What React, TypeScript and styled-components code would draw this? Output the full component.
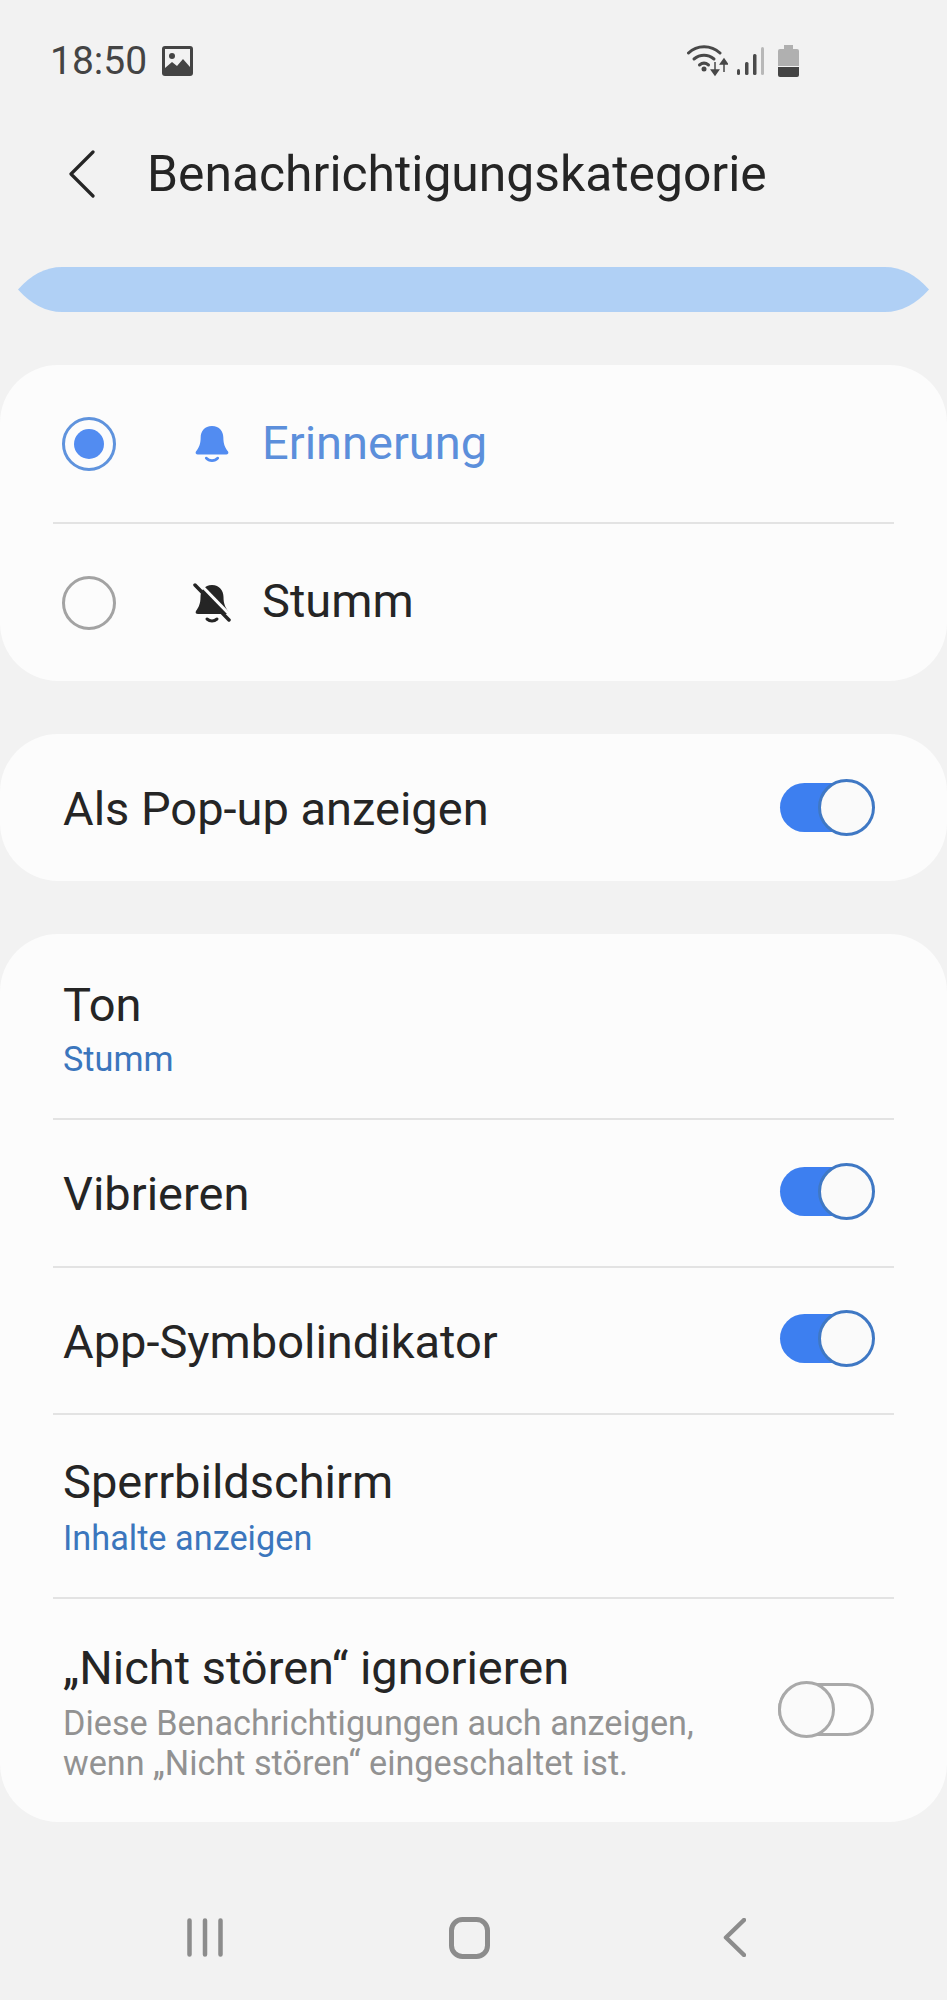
import React from "react";
import styled, { createGlobalStyle } from "styled-components";

const Global = createGlobalStyle`
  html, body { margin: 0; padding: 0; background: #f2f2f2; }
  * { box-sizing: border-box; }
`;

const Page = styled.div`
  width: 947px;
  height: 2000px;
  background: #f2f2f2;
  font-family: Roboto, "Liberation Sans", sans-serif;
  color: #252525;
  display: flex;
  flex-direction: column;
  overflow: hidden;
`;

const StatusBar = styled.div`
  height: 122px;
  padding: 0 148px 0 50px;
  display: flex;
  align-items: center;
  color: #484848;
`;
const Clock = styled.span`
  font-size: 39px;
  margin-right: 15px;
  color: #444;
`;
const StatusRight = styled.div`
  margin-left: auto;
  display: flex;
  align-items: center;
  gap: 9px;
`;

const Header = styled.header`
  height: 104px;
  display: flex;
  align-items: center;
  padding-left: 67px;
`;
const Title = styled.h1`
  margin: 0 0 0 51px;
  font-size: 49.8px;
  font-weight: 400;
  color: #252525;
`;

const Band = styled.div`
  width: 911px;
  height: 45px;
  margin: 41px 0 53px 18px;
  background: #b0d0f5;
  clip-path: path("M0 22.5 Q 20 0 44 0 H 867 Q 891 0 911 22.5 Q 891 45 867 45 H 44 Q 20 45 0 22.5 Z");
`;

const Card = styled.section`
  background: #fcfcfc;
  border-radius: 58px;
  margin-bottom: 53px;
`;
const Row = styled.div<{ $h: number; $last?: boolean }>`
  height: ${(p) => p.$h}px;
  margin: 0 53px;
  padding: 0 20px 0 10px;
  display: flex;
  align-items: center;
  border-bottom: ${(p) => (p.$last ? "none" : "2px solid #e3e3e3")};
`;
const RadioRow = styled(Row)`
  padding-left: 9px;
`;
const Radio = styled.span<{ $on?: boolean }>`
  width: 54px;
  height: 54px;
  flex: none;
  border-radius: 50%;
  border: 3px solid ${(p) => (p.$on ? "#5f93dd" : "#a3a3a3")};
  display: flex;
  align-items: center;
  justify-content: center;
  margin-right: 77px;
`;
const RadioDot = styled.span`
  width: 30px;
  height: 30px;
  border-radius: 50%;
  background: #528cf1;
`;
const BellSlot = styled.span`
  width: 38px;
  height: 40px;
  flex: none;
  margin-right: 31px;
  display: flex;
  align-items: center;
  justify-content: center;
`;
const Label = styled.span<{ $accent?: boolean; $nudge?: number }>`
  font-size: 47px;
  line-height: 56px;
  margin-top: ${(p) => p.$nudge ?? 0}px;
  color: ${(p) => (p.$accent ? "#5c8fdb" : "#252525")};
  white-space: nowrap;
`;
const Stack = styled.div<{ $gap: number; $down?: number }>`
  display: flex;
  flex-direction: column;
  margin-top: ${(p) => p.$down ?? 0}px;
  > span:first-child { margin-bottom: ${(p) => p.$gap}px; }
`;
const Sub = styled.span`
  font-size: 34.3px;
  line-height: 40px;
  color: #3b76bd;
`;
const Desc = styled.span`
  font-size: 34.2px;
  line-height: 40px;
  color: #929292;
  white-space: nowrap;
`;
const Toggle = styled.span<{ $on?: boolean; $up?: number }>`
  position: relative;
  margin-left: auto;
  margin-bottom: ${(p) => p.$up ?? 0}px;
  flex: none;
  width: ${(p) => (p.$on ? 94 : 96)}px;
  height: ${(p) => (p.$on ? 49 : 53)}px;
  border-radius: 27px;
  background: ${(p) => (p.$on ? "#3d7ff0" : "#fcfcfc")};
  border: ${(p) => (p.$on ? "none" : "3px solid #a9a9a9")};
`;
const Thumb = styled.span<{ $on?: boolean }>`
  position: absolute;
  top: ${(p) => (p.$on ? "-4px" : "-5px")};
  ${(p) => (p.$on ? "right: -1px;" : "left: -3px;")}
  width: 57px;
  height: 57px;
  border-radius: 50%;
  background: #fafafa;
  border: 3px solid ${(p) => (p.$on ? "#3f78c4" : "#a9a9a9")};
`;

const Nav = styled.nav`
  flex: 1;
  display: flex;
  align-items: center;
  gap: 226px;
  padding-left: 187px;
  > svg:last-child { margin-left: 7px; }
`;

const Bell = ({ color }: { color: string }) => (
  <svg width="34" height="38" viewBox="0 0 36 40">
    <path
      d="M18 1c8 0 12 6 12 12 0 7 2 11 5 15 1 2 0 3-2 3H3c-2 0-3-1-2-3 3-4 5-8 5-15C6 7 10 1 18 1z"
      fill={color}
    />
    <path d="M12 35c3 3.500 9 3.500 12 0" fill="none" stroke={color} strokeWidth="3" strokeLinecap="round" />
  </svg>
);

const BellOff = () => (
  <svg width="38" height="40" viewBox="0 0 38 40">
    <path
      d="M19 2c7.500 0 11.500 6 11.500 12 0 7 2 10.500 4.500 14 1 2 0 3-2 3H5c-2 0-3-1-2-3 2.500-3.500 4.500-7 4.500-14C7.500 8 11.500 2 19 2z"
      fill="#252525"
    />
    <path d="M5 -1 38 33" fill="none" stroke="#fcfcfc" strokeWidth="3" />
    <path d="M2 2 36 37" fill="none" stroke="#252525" strokeWidth="3.500" strokeLinecap="round" />
    <path d="M14 36c3 2.500 7 2.500 10 0" fill="none" stroke="#252525" strokeWidth="3" strokeLinecap="round" />
  </svg>
);

const Switch = ({ on, up }: { on?: boolean; up?: number }) => (
  <Toggle $on={on} $up={up}>
    <Thumb $on={on} />
  </Toggle>
);

export default function App() {
  return (
    <>
      <Global />
      <Page>
        <StatusBar>
          <Clock>18:50</Clock>
          <svg width="31" height="30" viewBox="0 0 31 30">
            <rect width="31" height="30" rx="3" fill="#444" />
            <rect x="3" y="3" width="25" height="24" fill="#f2f2f2" />
            <circle cx="10" cy="10" r="3" fill="#444" />
            <path d="M3 27V22l7-6 5 4 6-7 7 8v6z" fill="#444" />
          </svg>
          <StatusRight>
            <svg width="41" height="32" viewBox="0 0 41 32">
              <g fill="none" stroke="#484848" strokeWidth="3" strokeLinecap="round">
                <path d="M1.500 8C10-.5 24-.5 33 8" />
                <path d="M7 14c6-5 14-5 20 0" />
                <path d="M12.500 20c3-2.500 6-2.500 9 0" />
              </g>
              <circle cx="17" cy="24" r="2.500" fill="#484848" />
              <path d="M28 17v11M24.500 25l3.500 5 3.500-5zM37 27V16M33.500 19l3.500-5 3.500 5z" fill="#484848" stroke="#484848" strokeWidth="1.500" />
            </svg>
            <svg width="27" height="30" viewBox="0 0 27 30">
              <rect x="0" y="23" width="3" height="6" rx="1.500" fill="#4a4a4a" />
              <rect x="8" y="16" width="3.500" height="13" rx="1.500" fill="#4a4a4a" />
              <rect x="16" y="8" width="3.500" height="21" rx="1.500" fill="#4a4a4a" />
              <rect x="24" y="1" width="3" height="28" rx="1.500" fill="#b8b8b8" />
            </svg>
            <svg width="21" height="32" viewBox="0 0 21 32" style={{ marginLeft: 5 }}>
              <rect x="6" y="0" width="9" height="5" fill="#b0b0b0" />
              <path d="M2 4h17a2 2 0 0 1 2 2v15H0V6a2 2 0 0 1 2-2z" fill="#b0b0b0" />
              <path d="M0 22h21v8a2 2 0 0 1-2 2H2a2 2 0 0 1-2-2z" fill="#444" />
            </svg>
          </StatusRight>
        </StatusBar>

        <Header>
          <svg width="29" height="48" viewBox="0 0 29 48">
            <path d="M26 2 4 24l22 22" fill="none" stroke="#252525" strokeWidth="3.200" strokeLinecap="round" strokeLinejoin="round" />
          </svg>
          <Title>Benachrichtigungskategorie</Title>
        </Header>

        <Band />

        <Card>
          <RadioRow $h={159}>
            <Radio $on>
              <RadioDot />
            </Radio>
            <BellSlot>
              <Bell color="#528cf1" />
            </BellSlot>
            <Label $accent $nudge={-1}>Erinnerung</Label>
          </RadioRow>
          <RadioRow $h={157} $last>
            <Radio />
            <BellSlot>
              <BellOff />
            </BellSlot>
            <Label $nudge={-3}>Stumm</Label>
          </RadioRow>
        </Card>

        <Card>
          <Row $h={147} $last>
            <Label $nudge={3}>Als Pop-up anzeigen</Label>
            <Switch on up={0} />
          </Row>
        </Card>

        <Card>
          <Row $h={186}>
            <Stack $gap={6} $down={3}>
              <Label>Ton</Label>
              <Sub>Stumm</Sub>
            </Stack>
          </Row>
          <Row $h={148}>
            <Label $nudge={2}>Vibrieren</Label>
            <Switch on up={4} />
          </Row>
          <Row $h={147}>
            <Label $nudge={3}>App-Symbolindikator</Label>
            <Switch on up={4} />
          </Row>
          <Row $h={184}>
            <Stack $gap={8}>
              <Label>Sperrbildschirm</Label>
              <Sub>Inhalte anzeigen</Sub>
            </Stack>
          </Row>
          <Row $h={223} $last>
            <Stack $gap={7} $down={2}>
              <Label>„Nicht stören“ ignorieren</Label>
              <Desc>Diese Benachrichtigungen auch anzeigen,</Desc>
              <Desc>wenn „Nicht stören“ eingeschaltet ist.</Desc>
            </Stack>
            <Switch up={3} />
          </Row>
        </Card>

        <Nav>
          <svg width="36" height="39" viewBox="0 0 36 39">
            <g stroke="#8c8c8c" strokeWidth="4.500" strokeLinecap="round">
              <path d="M2.500 2.500v34M18 2.500v34M33.500 2.500v34" />
            </g>
          </svg>
          <svg width="41" height="42" viewBox="0 0 41 42">
            <rect x="2.500" y="2.500" width="36" height="37" rx="11" fill="none" stroke="#8c8c8c" strokeWidth="5" />
          </svg>
          <svg width="23" height="39" viewBox="0 0 23 39">
            <path d="M21 2 3 19.500 21 37" fill="none" stroke="#8c8c8c" strokeWidth="4.500" strokeLinecap="round" strokeLinejoin="round" />
          </svg>
        </Nav>
      </Page>
    </>
  );
}
